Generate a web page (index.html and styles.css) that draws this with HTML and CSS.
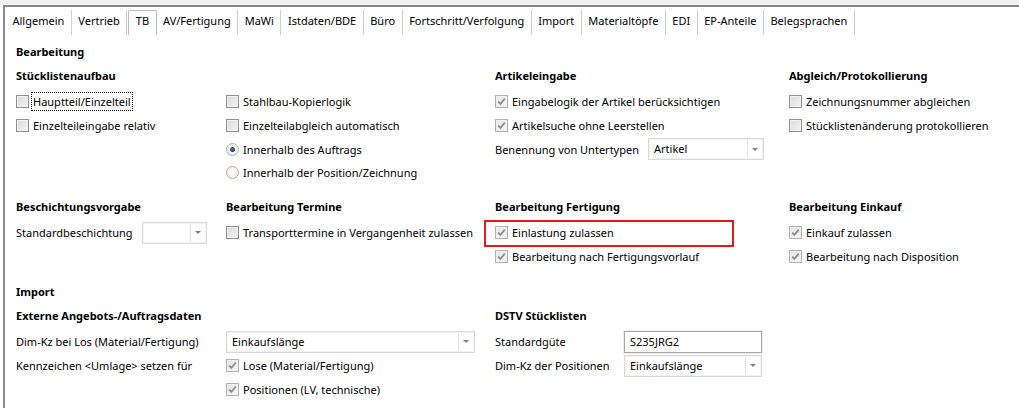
FILE: index.html
```html
<!DOCTYPE html>
<html lang="de">
<head>
<meta charset="utf-8">
<title>TB</title>
<link rel="stylesheet" href="styles.css">
</head>
<body>
<div class="topstrip"></div>
<div class="window">
  <nav class="tabs">
    <span class="tab">Allgemein</span>
    <span class="tab">Vertrieb</span>
    <span class="tab active">TB</span>
    <span class="tab">AV/Fertigung</span>
    <span class="tab">MaWi</span>
    <span class="tab">Istdaten/BDE</span>
    <span class="tab">Büro</span>
    <span class="tab">Fortschritt/Verfolgung</span>
    <span class="tab">Import</span>
    <span class="tab">Materialtöpfe</span>
    <span class="tab">EDI</span>
    <span class="tab">EP-Anteile</span>
    <span class="tab">Belegsprachen</span>
  </nav>

  <main class="content">
    <div class="group-title">Bearbeitung</div>

    <section class="cols sec1">
      <div class="col">
        <div class="head">Stücklistenaufbau</div>
        <div class="item"><span class="cb"></span><span class="lbl focus">Hauptteil/Einzelteil</span></div>
        <div class="item"><span class="cb"></span><span class="lbl">Einzelteileingabe relativ</span></div>
      </div>
      <div class="col">
        <div class="head"></div>
        <div class="item"><span class="cb"></span><span class="lbl">Stahlbau-Kopierlogik</span></div>
        <div class="item"><span class="cb"></span><span class="lbl">Einzelteilabgleich automatisch</span></div>
        <div class="item"><span class="rb on"></span><span class="lbl">Innerhalb des Auftrags</span></div>
        <div class="item"><span class="rb"></span><span class="lbl">Innerhalb der Position/Zeichnung</span></div>
      </div>
      <div class="col">
        <div class="head">Artikeleingabe</div>
        <div class="item"><span class="cb checked"><svg viewBox="0 0 11 11"><path d="M2.2 5.6 L4.4 7.9 L8.8 2.6" /></svg></span><span class="lbl">Eingabelogik der Artikel berücksichtigen</span></div>
        <div class="item"><span class="cb checked"><svg viewBox="0 0 11 11"><path d="M2.2 5.6 L4.4 7.9 L8.8 2.6" /></svg></span><span class="lbl">Artikelsuche ohne Leerstellen</span></div>
        <div class="item"><span class="field-label w151">Benennung von Untertypen</span><span class="combo w116"><span class="combo-text">Artikel</span><span class="combo-btn"><i class="tri"></i></span></span></div>
      </div>
      <div class="col">
        <div class="head">Abgleich/Protokollierung</div>
        <div class="item"><span class="cb"></span><span class="lbl">Zeichnungsnummer abgleichen</span></div>
        <div class="item"><span class="cb"></span><span class="lbl">Stücklistenänderung protokollieren</span></div>
      </div>
    </section>

    <section class="cols sec2">
      <div class="col">
        <div class="head">Beschichtungsvorgabe</div>
        <div class="item"><span class="field-label w126">Standardbeschichtung</span><span class="combo w65"><span class="combo-text"></span><span class="combo-btn"><i class="tri"></i></span></span></div>
      </div>
      <div class="col">
        <div class="head">Bearbeitung Termine</div>
        <div class="item"><span class="cb"></span><span class="lbl">Transporttermine in Vergangenheit zulassen</span></div>
      </div>
      <div class="col">
        <div class="head">Bearbeitung Fertigung</div>
        <div class="item marked"><span class="cb checked"><svg viewBox="0 0 11 11"><path d="M2.2 5.6 L4.4 7.9 L8.8 2.6" /></svg></span><span class="lbl">Einlastung zulassen</span><span class="redbox"></span></div>
        <div class="item"><span class="cb checked"><svg viewBox="0 0 11 11"><path d="M2.2 5.6 L4.4 7.9 L8.8 2.6" /></svg></span><span class="lbl">Bearbeitung nach Fertigungsvorlauf</span></div>
      </div>
      <div class="col">
        <div class="head">Bearbeitung Einkauf</div>
        <div class="item"><span class="cb checked"><svg viewBox="0 0 11 11"><path d="M2.2 5.6 L4.4 7.9 L8.8 2.6" /></svg></span><span class="lbl">Einkauf zulassen</span></div>
        <div class="item"><span class="cb checked"><svg viewBox="0 0 11 11"><path d="M2.2 5.6 L4.4 7.9 L8.8 2.6" /></svg></span><span class="lbl">Bearbeitung nach Disposition</span></div>
      </div>
    </section>

    <div class="group-title import-title">Import</div>

    <section class="import-grid">
      <div class="head span2">Externe Angebots-/Auftragsdaten</div>
      <div class="head span2">DSTV Stücklisten</div>

      <div class="cell">Dim-Kz bei Los (Material/Fertigung)</div>
      <div class="cell"><span class="combo w249"><span class="combo-text">Einkaufslänge</span><span class="combo-btn"><i class="tri"></i></span></span></div>
      <div class="cell">Standardgüte</div>
      <div class="cell"><span class="textbox">S235JRG2</span></div>

      <div class="cell">Kennzeichen &lt;Umlage&gt; setzen für</div>
      <div class="cell item"><span class="cb checked"><svg viewBox="0 0 11 11"><path d="M2.2 5.6 L4.4 7.9 L8.8 2.6" /></svg></span><span class="lbl">Lose (Material/Fertigung)</span></div>
      <div class="cell">Dim-Kz der Positionen</div>
      <div class="cell"><span class="combo w138"><span class="combo-text">Einkaufslänge</span><span class="combo-btn"><i class="tri"></i></span></span></div>

      <div class="cell"></div>
      <div class="cell item"><span class="cb checked"><svg viewBox="0 0 11 11"><path d="M2.2 5.6 L4.4 7.9 L8.8 2.6" /></svg></span><span class="lbl">Positionen (LV, technische)</span></div>
      <div class="cell"></div>
      <div class="cell"></div>
    </section>
  </main>
</div>
</body>
</html>
```

FILE: styles.css
```css
* { box-sizing: border-box; }

html, body {
  margin: 0;
  padding: 0;
  background: #ffffff;
  width: 1019px;
  height: 408px;
  overflow: hidden;
}

body {
  font-family: "Noto Sans", "Open Sans", sans-serif;
  font-size: 11px;
  color: #000000;
}

.topstrip {
  height: 5px;
  background: #f0f0f0;
}

.window {
  margin-left: 3px;
  border-top: 2px solid #858585;
  border-left: 2px solid #8a8a8a;
  height: 403px;
}

/* Tabs */
.tabs {
  display: flex;
  align-items: flex-start;
  height: 28px;
  padding: 3px 0 0 1px;
}

.tab {
  height: 25px;
  line-height: 22px;
  padding: 0 6.5px;
  border-right: 1px solid #cfcfcf;
  white-space: nowrap;
}

.tab.active {
  border: 1px solid #bdbdbd;
  border-bottom: none;
  border-radius: 2px 2px 0 0;
  margin-left: 1px;
  padding: 0 6.5px;
  line-height: 20px;
}

/* Content */
.content {
  padding: 5px 0 0 11px;
}

.group-title,
.head {
  font-weight: bold;
  height: 24px;
  line-height: 24px;
  white-space: nowrap;
}

.import-title {
  margin-top: 11px;
}

.cols {
  display: grid;
  grid-template-columns: 210px 269px 294px 1fr;
}

.sec2 {
  margin-top: 10px;
}

.col {
  display: flex;
  flex-direction: column;
}

.col .head {
  margin-bottom: 2px;
}

.item {
  display: flex;
  align-items: center;
  height: 24px;
  white-space: nowrap;
  position: relative;
}

.sec1 .col .item {
  height: 23.67px;
}

.lbl {
  margin-left: 4px;
}

.lbl.focus {
  outline: 1px dotted #000;
  outline-offset: 1px;
}

/* Checkbox */
.cb {
  width: 13px;
  height: 13px;
  flex: none;
  border: 1px solid #8f8f8f;
  background: linear-gradient(135deg, #d9d9d9 0%, #f5f5f5 100%);
  box-shadow: inset 0 0 0 1px #f2f2f2;
  display: flex;
  align-items: center;
  justify-content: center;
}

.cb.checked {
  border-color: #b1b1b1;
  background: linear-gradient(135deg, #e4e4e4 0%, #f7f7f7 100%);
}

.cb svg {
  width: 11px;
  height: 11px;
  display: block;
}

.cb svg path {
  fill: none;
  stroke: #8c8c8c;
  stroke-width: 1.7;
}

/* Radio */
.rb {
  width: 13px;
  height: 13px;
  flex: none;
  border-radius: 50%;
  border: 1px solid #b9aba0;
  background: radial-gradient(circle at 50% 50%, #ffffff 0%, #f4f1ee 70%, #e9e4df 100%);
  display: flex;
  align-items: center;
  justify-content: center;
}

.rb.on::after {
  content: "";
  width: 5px;
  height: 5px;
  border-radius: 50%;
  background: radial-gradient(circle at 40% 40%, #5b7394 0%, #1d2f4d 80%);
}

/* Labels before fields */
.field-label {
  white-space: nowrap;
}
.w151 { width: 153px; flex: none; }
.w126 { width: 126px; flex: none; }

/* Combo */
.combo {
  display: flex;
  height: 22px;
  border: 1px solid #d9d9d9;
  background: #ffffff;
  box-shadow: inset 0 0 0 1px #f3f3f3;
}

.w116 { width: 116px; }
.w65 { width: 65px; }
.w249 { width: 249px; }
.w138 { width: 138px; }

.combo-text {
  flex: 1;
  line-height: 20px;
  padding-left: 5px;
  overflow: hidden;
  white-space: nowrap;
}

.combo-btn {
  width: 15px;
  flex: none;
  border-left: 1px solid #e3e3e3;
  margin: 1px 1px 1px 0;
  display: flex;
  align-items: center;
  justify-content: center;
}

.tri {
  width: 0;
  height: 0;
  border-left: 3px solid transparent;
  border-right: 3px solid transparent;
  border-top: 3px solid #7f7f7f;
}

/* Textbox */
.textbox {
  display: block;
  width: 138px;
  height: 22px;
  line-height: 20px;
  padding-left: 5px;
  border: 1px solid #a7a7a7;
  box-shadow: 0 0 0 1px #ececec;
}

/* Annotation */
.redbox {
  position: absolute;
  left: -11px;
  top: -1px;
  width: 250px;
  height: 27px;
  border: 2px solid #e8171a;
  pointer-events: none;
}

/* Import grid */
.import-grid {
  display: grid;
  grid-template-columns: 210px 269px 129px 1fr;
  grid-template-rows: 26px 24px 24px 24px;
  align-items: center;
}

.import-grid .head {
  align-self: start;
}

.span2 {
  grid-column: span 2;
}

.cell {
  white-space: nowrap;
}
```
